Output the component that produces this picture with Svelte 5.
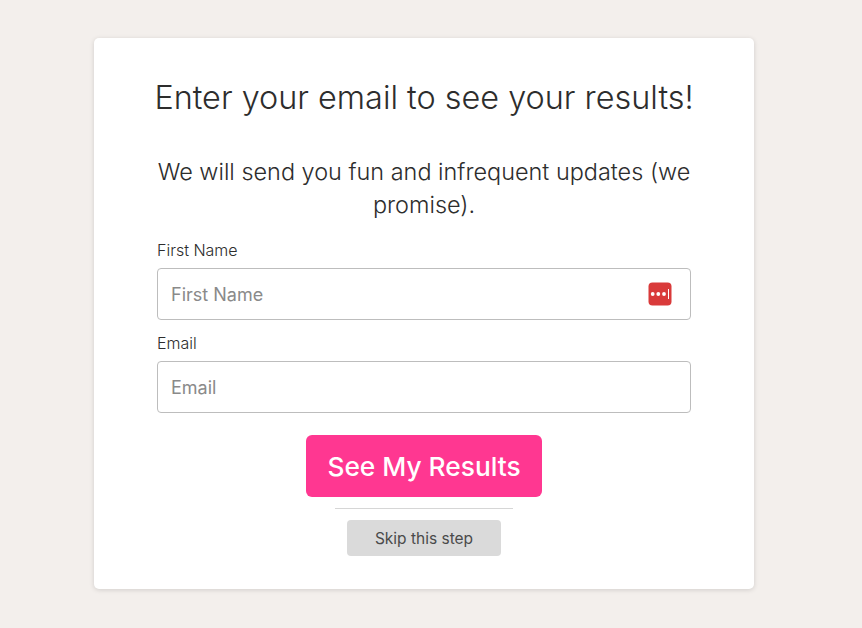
<script>
    let firstName = $state("");
    let email = $state("");
</script>

<main class="page">
    <form class="card" onsubmit={(e) => e.preventDefault()}>
        <h1>Enter your email to see your results!</h1>
        <p class="intro">We will send you fun and infrequent updates (we promise).</p>

        <label class="field">
            <span>First Name</span>
            <div class="input-wrap">
                <input type="text" placeholder="First Name" bind:value={firstName} />
                <svg class="pass-icon" width="24" height="24" viewBox="0 0 24 24">
                    <rect x="0.5" y="0.5" width="23" height="23" rx="4" fill="#d93a3a" />
                    <circle cx="4.7" cy="12" r="1.9" fill="#fff" />
                    <circle cx="10.3" cy="12" r="1.9" fill="#fff" />
                    <circle cx="16" cy="12" r="1.9" fill="#fff" />
                    <rect x="20" y="7" width="1" height="10" fill="#fff" />
                </svg>
            </div>
        </label>

        <label class="field">
            <span>Email</span>
            <div class="input-wrap">
                <input type="email" placeholder="Email" bind:value={email} />
            </div>
        </label>

        <button class="submit" type="submit">See My Results</button>
        <hr />
        <button class="skip" type="button">Skip this step</button>
    </form>
</main>

<style>
    :global(body) {
        background: #f3efec;
        font-family: "Inter", "Open Sans", sans-serif;
    }

    .page {
        display: flex;
        justify-content: center;
        padding: 38px 14px 0 0;
        height: 590px;
    }

    .card {
        box-sizing: border-box;
        width: 660px;
        height: 551px;
        padding: 36px 63px 0;
        background: #fff;
        border-radius: 5px;
        box-shadow: 0 1px 5px rgba(0, 0, 0, 0.14);
        display: flex;
        flex-direction: column;
        align-items: center;
        color: #2d2d2d;
    }

    h1 {
        margin: 0;
        font-size: 32.4px;
        font-weight: 300;
        line-height: 48px;
        white-space: nowrap;
        text-align: center;
    }

    .intro {
        margin: 33px 0 0;
        font-size: 23.45px;
        font-weight: 300;
        line-height: 33px;
        text-align: center;
    }

    .field {
        width: 100%;
        display: block;
    }

    .field span {
        display: block;
        font-size: 16px;
        font-weight: 300;
        line-height: 24px;
        margin-top: 17px;
        margin-bottom: 6px;
    }

    .field + .field span {
        margin-top: 11px;
    }

    .input-wrap {
        position: relative;
    }

    input {
        box-sizing: border-box;
        width: 100%;
        height: 52px;
        padding: 0 13px;
        border: 1px solid #bdbdbd;
        border-radius: 4px;
        font: inherit;
        font-size: 18px;
        color: #2d2d2d;
        outline: none;
    }

    input::placeholder {
        color: #8a8a8a;
    }

    .pass-icon {
        position: absolute;
        right: 19px;
        top: 14px;
    }

    .submit {
        margin-top: 22px;
        width: 236px;
        height: 62px;
        border: none;
        border-radius: 6px;
        background: #ff3791;
        color: #fff;
        font: inherit;
        font-size: 26.3px;
        font-weight: 500;
    }

    hr {
        width: 178px;
        margin: 11px 0 0;
        border: none;
        border-top: 1px solid #d6d6d6;
    }

    .skip {
        margin-top: 11px;
        width: 154px;
        height: 36px;
        border: none;
        border-radius: 4px;
        background: #dadada;
        color: #4a4a4a;
        font: inherit;
        font-size: 15.5px;
    }
</style>
